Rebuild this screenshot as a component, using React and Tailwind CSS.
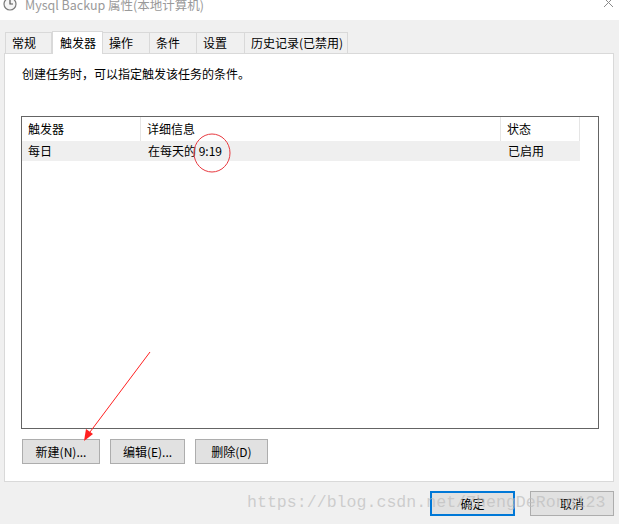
const font = { fontFamily: '"Microsoft YaHei", "Noto Sans CJK SC", sans-serif' };

const tabs = ["常规", "触发器", "操作", "条件", "设置", "历史记录(已禁用)"];
const tabW = [47, 51, 47, 47, 48, 103];

const Btn = ({ children, w, primary }) => (
  <div
    className={`h-[25px] flex items-center justify-center text-[12px] text-black whitespace-nowrap ${
      primary ? "border-2 border-[#0078d7] bg-[#e1e1e1]" : "border border-[#adadad] bg-[#e1e1e1]"
    }`}
    style={{ width: w }}
  >
    {children}
  </div>
);

export default function App() {
  return (
    <div className="w-[619px] h-[524px] bg-[#f0f0f0] relative overflow-hidden" style={font}>
      {/* title bar */}
      <div className="h-[20px] bg-white flex items-start relative">
        <svg className="absolute left-[3px] -top-[3px]" width="14" height="14" viewBox="0 0 14 14">
          <circle cx="7" cy="7" r="6" fill="#f5f5f5" stroke="#7a7a7a" strokeWidth="1.2" />
          <path d="M7 3v4h3" stroke="#555" strokeWidth="1.2" fill="none" />
        </svg>
        <span className="ml-[25px] -mt-[5px] text-[12.5px] text-[#9a9a9a] leading-[20px] whitespace-nowrap">
          Mysql Backup 属性(本地计算机)
        </span>
        <svg className="absolute right-[5px] -top-[3px]" width="11" height="11" viewBox="0 0 11 11">
          <path d="M1 1l9 9M10 1l-9 9" stroke="#8a8a8a" strokeWidth="1" />
        </svg>
      </div>

      {/* tabs */}
      <div className="flex items-end pl-[5px] pt-[10px] h-[33px]">
        {tabs.map((t, i) => (
          <div
            key={t}
            className={`flex items-center text-[12px] text-black whitespace-nowrap border-[#d9d9d9] ${
              i === 1
                ? "h-[23px] bg-white border-l border-t border-r pl-[7px] relative z-10 -mb-[1px]"
                : "h-[21px] bg-[#f0f0f0] border-t border-r pl-[6px]"
            } ${i === 0 ? "border-l" : ""}`}
            style={{ width: tabW[i] }}
          >
            {t}
          </div>
        ))}
      </div>

      {/* panel */}
      <div className="ml-[4px] w-[610px] h-[429px] bg-white border border-[#d9d9d9] flex flex-col">
        <div className="pl-[17px] pt-[12px] text-[12px] text-black leading-[16px]">
          创建任务时，可以指定触发该任务的条件。
        </div>
        <div className="ml-[16px] mt-[34px] w-[578px] h-[313px] border border-[#646464] flex flex-col">
          <div className="flex h-[24px] text-[12px] text-black">
            <div className="w-[119px] border-r border-[#e5e5e5] flex items-center pl-[6px]">触发器</div>
            <div className="w-[360px] border-r border-[#e5e5e5] flex items-center pl-[6px]">详细信息</div>
            <div className="w-[79px] border-r border-[#e5e5e5] flex items-center pl-[6px]">状态</div>
          </div>
          <div className="flex h-[20px] text-[12px] text-black">
            <div className="w-[558px] bg-[#efefef] flex items-center">
              <div className="w-[120px] pl-[6px]">每日</div>
              <div className="w-[360px] pl-[6px]">在每天的 9:19</div>
              <div className="pl-[6px]">已启用</div>
            </div>
          </div>
        </div>
        <div className="flex ml-[17px] mt-[10px] gap-[10px]">
          <Btn w={78}>新建(N)...</Btn>
          <Btn w={75}>编辑(E)...</Btn>
          <Btn w={73}>删除(D)</Btn>
        </div>
      </div>

      {/* bottom buttons */}
      <div className="flex justify-end gap-[15px] pr-[5px] mt-[9px]">
        <Btn w={85} primary>确定</Btn>
        <Btn w={84}>取消</Btn>
      </div>

      {/* watermark */}
      <div
        className="absolute left-[247px] top-[492px] text-[16.6px] leading-[22px] text-[#bdbdbd]/70 pointer-events-none whitespace-nowrap"
        style={{ fontFamily: '"Liberation Mono", monospace' }}
      >
        https://blog.csdn.net/ZhengDeRong123
      </div>

      {/* annotations */}
      <svg className="absolute left-0 top-0 pointer-events-none" width="619" height="524">
        <ellipse cx="212" cy="153" rx="18" ry="19" fill="none" stroke="#e8393f" strokeWidth="1" />
        <line x1="150" y1="352" x2="87" y2="436" stroke="#ff2020" strokeWidth="1" />
        <path d="M84 441 L86 429 L93 434 Z" fill="#ff2020" />
      </svg>
    </div>
  );
}
